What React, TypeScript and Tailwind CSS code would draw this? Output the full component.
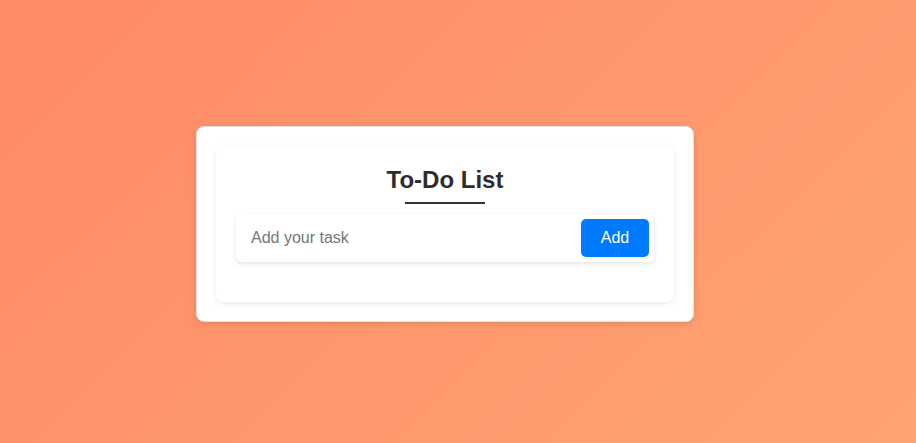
import React from "react";

export default function App() {
  return (
    <div
      className="w-full h-[443px] flex items-center justify-center pr-[26px] pt-[5px] bg-[linear-gradient(135deg,#ff8a66,#ffa472)]"
      style={{ fontFamily: '"Liberation Sans", Arial, sans-serif' }}
    >
      <div className="w-[498px] p-[19px] bg-white rounded-lg border border-[#e2e2e2] shadow-[0_2px_6px_rgba(0,0,0,0.12)]">
        <div className="bg-white rounded-lg p-5 pb-10 shadow-[0_2px_6px_rgba(0,0,0,0.08)]">
          <h1 className="text-center text-[24px] leading-[28px] font-bold text-[#2d2d2d]">To-Do List</h1>
          <div className="mx-auto mt-2 w-20 h-[2px] bg-[#333]" />
          <div className="mt-[10px] h-12 flex items-center pl-[15px] pr-[5px] rounded-md bg-white shadow-[0_2px_5px_rgba(0,0,0,0.1)]">
            <input
              className="flex-1 outline-none border-none bg-transparent text-[16px] text-[#333] placeholder:text-[#757575] caret-[#333]"
              placeholder="Add your task"
              autoFocus
            />
            <button className="w-[68px] h-[38px] rounded-[5px] bg-[#007bff] text-white text-[16px]">Add</button>
          </div>
        </div>
      </div>
    </div>
  );
}
